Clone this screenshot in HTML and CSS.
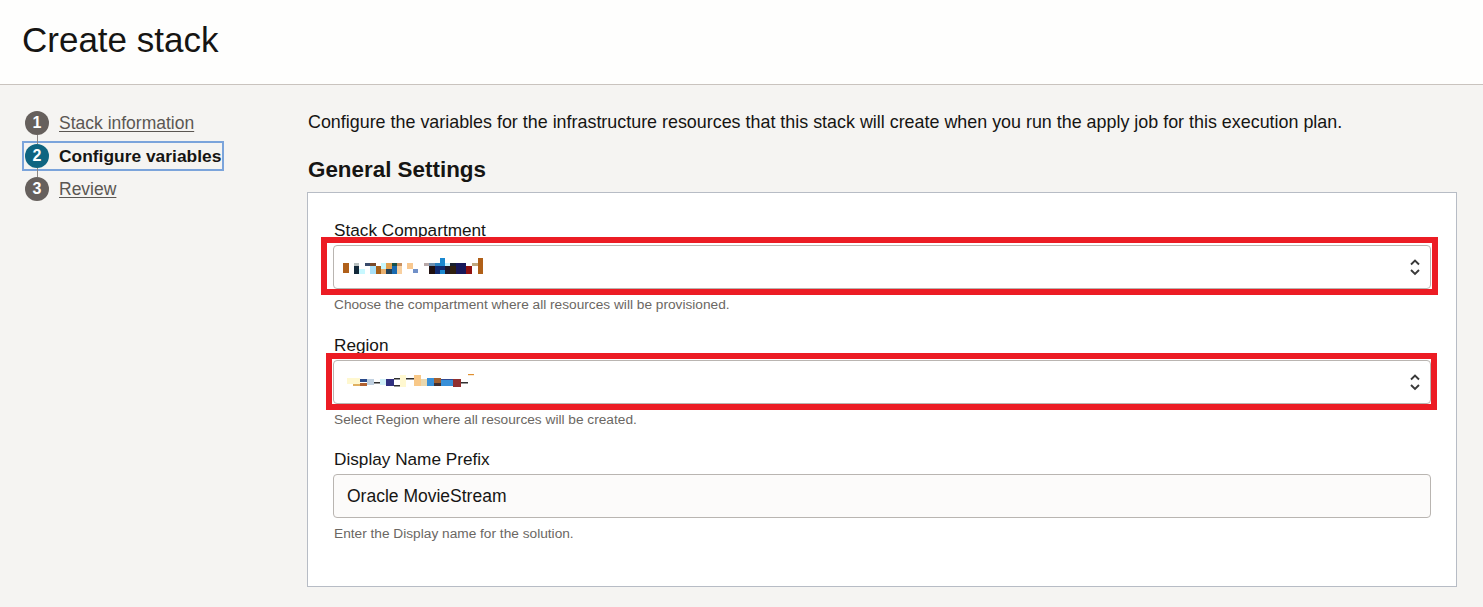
FILE: index.html
```html
<!DOCTYPE html>
<html lang="en">
<head>
<meta charset="utf-8">
<title>Create stack</title>
<link rel="stylesheet" href="styles.css">
</head>
<body>
<header class="page-header">
  <h1 class="page-title">Create stack</h1>
</header>
<div class="layout">
  <nav class="steps">
    <ol class="step-list">
      <li class="step"><span class="step-num">1</span><a class="step-link" href="#">Stack information</a></li>
      <li class="step step-active"><span class="step-num">2</span><span class="step-label">Configure variables</span></li>
      <li class="step"><span class="step-num">3</span><a class="step-link" href="#">Review</a></li>
    </ol>
  </nav>
  <main class="content">
    <p class="intro">Configure the variables for the infrastructure resources that this stack will create when you run the apply job for this execution plan.</p>
    <h2 class="section-title">General Settings</h2>
    <section class="panel">
      <div class="field">
        <label class="field-label">Stack Compartment</label>
        <div class="select-wrap">
          <div class="select">
            <svg class="redact" width="150" height="20" viewBox="0 0 150 20">
              <rect x="0" y="6" width="6" height="10" fill="#b0601a"/>
              <rect x="11" y="6" width="5" height="3" fill="#b8c0c0"/>
              <rect x="11" y="9" width="5" height="8" fill="#13293a"/>
              <rect x="16" y="12" width="6" height="5" fill="#c8f8ff"/>
              <rect x="22" y="6" width="5" height="3" fill="#3a4a6a"/>
              <rect x="27" y="6" width="6" height="3" fill="#7a4a2a"/>
              <rect x="27" y="9" width="6" height="8" fill="#a8e0f8"/>
              <rect x="33" y="9" width="5" height="8" fill="#a86018"/>
              <rect x="38" y="6" width="5" height="6" fill="#c8f8ff"/>
              <rect x="38" y="12" width="5" height="5" fill="#e8b070"/>
              <rect x="43" y="6" width="6" height="6" fill="#e0a050"/>
              <rect x="43" y="12" width="6" height="5" fill="#20405a"/>
              <rect x="49" y="6" width="5" height="3" fill="#185048"/>
              <rect x="49" y="9" width="5" height="8" fill="#1a6ab0"/>
              <rect x="54" y="6" width="5" height="3" fill="#c89060"/>
              <rect x="54" y="9" width="5" height="8" fill="#f8d0a0"/>
              <rect x="64" y="6" width="6" height="6" fill="#f8c890"/>
              <rect x="70" y="12" width="5" height="4" fill="#7090c8"/>
              <rect x="81" y="6" width="5" height="3" fill="#b8a8a8"/>
              <rect x="86" y="6" width="6" height="3" fill="#7090b0"/>
              <rect x="86" y="9" width="6" height="8" fill="#201010"/>
              <rect x="92" y="6" width="5" height="3" fill="#2a80c0"/>
              <rect x="92" y="9" width="5" height="8" fill="#102a70"/>
              <rect x="97" y="1" width="5" height="8" fill="#1a88d0"/>
              <rect x="97" y="9" width="5" height="4" fill="#102a70"/>
              <rect x="97" y="13" width="5" height="4" fill="#1a88d0"/>
              <rect x="102" y="6" width="5" height="3" fill="#c0f0ff"/>
              <rect x="102" y="9" width="5" height="8" fill="#201828"/>
              <rect x="107" y="6" width="6" height="3" fill="#182030"/>
              <rect x="107" y="9" width="6" height="8" fill="#302010"/>
              <rect x="113" y="6" width="10" height="11" fill="#18185a"/>
              <rect x="123" y="9" width="6" height="8" fill="#901010"/>
              <rect x="129" y="6" width="6" height="3" fill="#c0a880"/>
              <rect x="135" y="1" width="5" height="16" fill="#b06018"/>
            </svg>
            <svg class="chevrons" width="12" height="20" viewBox="0 0 12 20"><path d="M2 7.5 L6 3.5 L10 7.5 M2 13 L6 17 L10 13" fill="none" stroke="#3a3a3a" stroke-width="1.9"/></svg>
          </div>
          <div class="highlight highlight-a"></div>
        </div>
        <p class="help">Choose the compartment where all resources will be provisioned.</p>
      </div>
      <div class="field">
        <label class="field-label">Region</label>
        <div class="select-wrap">
          <div class="select">
            <svg class="redact" width="150" height="20" viewBox="0 0 150 20">
              <rect x="4" y="6" width="13" height="6" fill="#fff8d0"/>
              <rect x="10" y="12" width="7" height="2" fill="#e0b060"/>
              <rect x="17" y="7" width="7" height="3" fill="#2a4a8a"/>
              <rect x="17" y="11" width="7" height="3" fill="#b06030"/>
              <rect x="24" y="7" width="7" height="6" fill="#c0d0e0"/>
              <rect x="31" y="10" width="6" height="1.5" fill="#303030"/>
              <rect x="37" y="7" width="6" height="6" fill="#d0f0f8"/>
              <rect x="43" y="7" width="8" height="7" fill="#303080"/>
              <rect x="51" y="6" width="6" height="1.5" fill="#303030"/>
              <rect x="51" y="13" width="6" height="1.5" fill="#303030"/>
              <rect x="57" y="3" width="6" height="12" fill="#fff8d0"/>
              <rect x="63" y="6" width="8" height="1.5" fill="#303030"/>
              <rect x="71" y="3" width="7" height="11" fill="#f8c888"/>
              <rect x="78" y="7" width="6" height="7" fill="#e8d8b0"/>
              <rect x="84" y="6" width="7" height="8" fill="#3890d8"/>
              <rect x="91" y="6" width="7" height="5" fill="#a06030"/>
              <rect x="91" y="11" width="7" height="3" fill="#403030"/>
              <rect x="98" y="7" width="12" height="7" fill="#3890d8"/>
              <rect x="98" y="7" width="12" height="1" fill="#304890"/>
              <rect x="110" y="7" width="8" height="8" fill="#903030"/>
              <rect x="118" y="10" width="7" height="1.5" fill="#303030"/>
              <rect x="125" y="2" width="6" height="1.2" fill="#e09030"/>
            </svg>
            <svg class="chevrons" width="12" height="20" viewBox="0 0 12 20"><path d="M2 7.5 L6 3.5 L10 7.5 M2 13 L6 17 L10 13" fill="none" stroke="#3a3a3a" stroke-width="1.9"/></svg>
          </div>
          <div class="highlight highlight-b"></div>
        </div>
        <p class="help">Select Region where all resources will be created.</p>
      </div>
      <div class="field">
        <label class="field-label">Display Name Prefix</label>
        <div class="text-input">Oracle MovieStream</div>
        <p class="help">Enter the Display name for the solution.</p>
      </div>
    </section>
  </main>
</div>
</body>
</html>
```

FILE: styles.css
```css
* { box-sizing: border-box; }

html, body {
  margin: 0;
  padding: 0;
}

body {
  background: #f5f4f2;
  color: #161513;
  font-family: "Liberation Sans", Arial, sans-serif;
  height: 607px;
  overflow: hidden;
}

.page-header {
  background: #fefefd;
  border-bottom: 1px solid #c9c3be;
  height: 85px;
  padding: 20px 22px 0;
}

.page-title {
  margin: 0;
  font-size: 35px;
  line-height: 40px;
  font-weight: 400;
  color: #161513;
}

.layout {
  display: flex;
  padding-left: 22px;
}

.steps {
  flex: none;
  width: 285px;
  padding-top: 23px;
}

.step-list {
  list-style: none;
  margin: 0;
  padding: 0;
  display: flex;
  flex-direction: column;
  align-items: flex-start;
  gap: 3px;
}

.step {
  display: flex;
  align-items: center;
  gap: 10px;
  height: 30px;
  padding: 0 1px;
  border: 2px solid transparent;
  font-size: 17.5px;
}

.step-active {
  border-color: #7ba4db;
}

.step-num {
  position: relative;
  flex: none;
  width: 24px;
  height: 24px;
  border-radius: 50%;
  background: #66605d;
  color: #fff;
  font-size: 16px;
  font-weight: 700;
  display: flex;
  align-items: center;
  justify-content: center;
}

.step:not(:last-child) .step-num::after {
  content: "";
  position: absolute;
  left: 11.5px;
  top: 100%;
  width: 1px;
  height: 9px;
  background: #8c8784;
}

.step-active .step-num {
  background: #0f6581;
}

.step-link {
  color: #5b5753;
  text-decoration: underline;
  text-underline-offset: 2px;
}

.step-label {
  font-weight: 700;
  color: #161513;
  font-size: 17.4px;
}

.content {
  flex: 1;
  padding-top: 27px;
  padding-right: 26px;
}

.intro {
  margin: 0 0 0 1px;
  font-size: 17.9px;
  line-height: 21px;
  color: #161513;
}

.section-title {
  margin: 24px 0 9px 1px;
  font-size: 22.4px;
  line-height: 26px;
  font-weight: 700;
  color: #161513;
}

.panel {
  background: #ffffff;
  border: 1px solid #b7bcc5;
  padding: 27px 25px 44px;
  display: flex;
  flex-direction: column;
  gap: 21.5px;
}

.field {
  display: flex;
  flex-direction: column;
}

.field-label {
  display: block;
  font-size: 17.2px;
  line-height: 20px;
  margin: 0 0 5px 1px;
  color: #161513;
}

.select-wrap {
  position: relative;
}

.select {
  height: 44px;
  border: 1px solid #b9b5b1;
  border-radius: 4px;
  background: #fff;
  display: flex;
  align-items: center;
  padding: 0 9px;
}

.chevrons {
  margin-left: auto;
}

.highlight {
  position: absolute;
  border: 6px solid #ec1c24;
  pointer-events: none;
}

.highlight-a {
  left: -12px;
  top: -8px;
  right: -7px;
  bottom: -6px;
}

.highlight-b {
  left: -7px;
  top: -7px;
  right: -6px;
  bottom: -6px;
}

.text-input {
  height: 44px;
  border: 1px solid #b9b5b1;
  border-radius: 4px;
  background: #fcfbfa;
  display: flex;
  align-items: center;
  padding: 0 13px;
  font-size: 17.5px;
  color: #161513;
}

.help {
  margin: 8px 0 0 1px;
  font-size: 13.7px;
  line-height: 16px;
  color: #6b6763;
}
```
